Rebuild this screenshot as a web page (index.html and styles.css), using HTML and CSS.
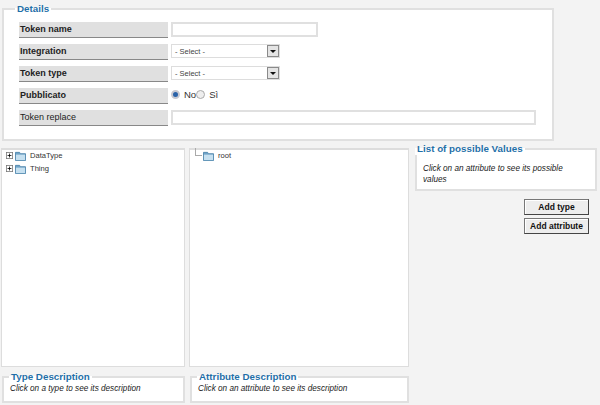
FILE: index.html
```html
<!DOCTYPE html>
<html lang="en">
<head>
  <meta charset="UTF-8">
  <title>Token</title>
  <link rel="stylesheet" href="styles.css">
</head>
<body>
  <svg class="defs" width="0" height="0">
    <symbol id="folder" viewBox="0 0 14 11">
      <path d="M1.5 10.5V1.5H6L7 3H12.5V10.5Z" fill="#6fa3c7" stroke="#4f87ad"/>
      <rect x="2" y="4" width="10" height="6" fill="#c6e0f0"/>
    </symbol>
    <symbol id="plus" viewBox="0 0 9 9">
      <rect x="0.5" y="0.5" width="8" height="8" fill="#fff" stroke="#777"/>
      <path d="M2 4.5H7M4.5 2V7" stroke="#000"/>
    </symbol>
  </svg>

  <fieldset class="box details">
    <legend>Details</legend>
    <div class="row">
      <label class="lbl">Token name</label>
      <input class="txt short" type="text">
    </div>
    <div class="row">
      <label class="lbl">Integration</label>
      <div class="sel">- Select -<span class="arrow"></span></div>
    </div>
    <div class="row">
      <label class="lbl">Token type</label>
      <div class="sel">- Select -<span class="arrow"></span></div>
    </div>
    <div class="row">
      <label class="lbl">Pubblicato</label>
      <div class="radios">
        <span class="radio on"></span><span class="opt">No</span><span class="radio"></span><span class="opt">Sì</span>
      </div>
    </div>
    <div class="row">
      <label class="lbl plain">Token replace</label>
      <input class="txt long" type="text">
    </div>
  </fieldset>

  <div class="main">
    <div class="col-tree">
      <div class="tree">
        <div class="node"><svg class="plus"><use href="#plus"/></svg><svg class="folder"><use href="#folder"/></svg>DataType</div>
        <div class="node"><svg class="plus"><use href="#plus"/></svg><svg class="folder"><use href="#folder"/></svg>Thing</div>
      </div>
      <fieldset class="box desc">
        <legend>Type Description</legend>
        <p>Click on a type to see its description</p>
      </fieldset>
    </div>
    <div class="col-tree second">
      <div class="tree">
        <div class="node root"><span class="elbow"></span><svg class="folder"><use href="#folder"/></svg>root</div>
      </div>
      <fieldset class="box desc">
        <legend>Attribute Description</legend>
        <p>Click on an attribute to see its description</p>
      </fieldset>
    </div>
    <div class="side">
      <fieldset class="box values">
        <legend>List of possible Values</legend>
        <p>Click on an attribute to see its possible values</p>
      </fieldset>
      <button class="btn" type="button">Add type</button>
      <button class="btn" type="button">Add attribute</button>
    </div>
  </div>
</body>
</html>
```

FILE: styles.css
```css
body {
  margin: 0;
  background-color: #f3f3f3;
  font-family: "Liberation Sans", Arial, sans-serif;
  font-size: 8.2px;
  color: #333;
  overflow: hidden;
}

.defs {
  display: block;
}

.box {
  margin: 0;
  padding: 0;
  background: white;
  border: 2px solid #e0e0e0;
  min-width: 0;
}

.box legend {
  padding: 0 2px;
  font-size: 9.8px;
  line-height: 13px;
  font-weight: bold;
  color: #1f6fa8;
}

.box p {
  margin: 0;
  font-style: italic;
  color: #222;
}

.details {
  width: 552px;
  height: 139px;
  box-sizing: border-box;
  margin: 2px 0 0 2px;
  padding: 7px 15px 0;
}

.details legend {
  margin-left: -4px;
}

.row {
  display: flex;
  align-items: flex-start;
  gap: 3px;
  height: 22px;
}

.lbl {
  width: 148px;
  height: 15px;
  line-height: 15px;
  padding-left: 1px;
  background: #e0e0e0;
  border-bottom: 1px solid #888;
  font-size: 9px;
  font-weight: bold;
  color: #222;
}

.lbl.plain {
  font-weight: normal;
}

.txt {
  margin: 0;
  padding: 0;
  height: 11px;
  background: white;
  border: 2px solid #e0e0e0;
}

.short {
  width: 143px;
}

.long {
  width: 361px;
}

.sel {
  display: flex;
  align-items: center;
  justify-content: space-between;
  width: 104px;
  height: 12px;
  padding-left: 3px;
  background: white;
  border: 1px solid #ddd;
  font-size: 7.5px;
  color: #444;
}

.arrow {
  position: relative;
  width: 10px;
  height: 10px;
  background: #e4e4e4;
  border: 1px solid #8a8a8a;
}

.arrow::after {
  content: "";
  position: absolute;
  left: 2px;
  top: 4px;
  border: 3px solid transparent;
  border-top: 3px solid #111;
  border-bottom: 0;
}

.radios {
  display: flex;
  align-items: center;
  height: 13px;
  font-size: 9.5px;
  color: #333;
}

.radio {
  width: 7px;
  height: 7px;
  background: #eee;
  border: 1px solid #aaa;
  border-radius: 50%;
}

.radio.on {
  background: #2a62a8;
  border: 2px solid #c8c8d0;
  width: 5px;
  height: 5px;
}

.opt {
  margin-left: 4px;
}

.main {
  display: flex;
  margin: 7px 0 0 1px;
}

.col-tree {
  width: 184px;
  margin-right: 4px;
}

.col-tree.second {
  width: 220px;
  margin-right: 6px;
}

.tree {
  box-sizing: border-box;
  height: 219px;
  background: white;
  border: 1px solid #ddd;
  border-top-width: 2px;
  padding: 0 0 0 3px;
}

.node {
  display: flex;
  align-items: center;
  height: 13px;
  font-size: 7.6px;
  color: #333;
}

.node:first-child {
  margin-top: -1px;
}

.plus {
  width: 7px;
  height: 7px;
  margin: 0 1px 0 1px;
}

.folder {
  width: 13px;
  height: 10px;
  margin-right: 3px;
}

.root {
  padding-left: 2px;
}

.elbow {
  width: 6px;
  height: 7px;
  margin: -7px 0 0 0;
  border-left: 1px solid #aaa;
  border-bottom: 1px solid #aaa;
}

.desc {
  height: 33px;
  box-sizing: border-box;
  margin-top: 3px;
  margin-left: 1px;
  padding: 0 6px;
}

.desc legend {
  margin-left: -1px;
}

.desc p {
  margin-top: 1px;
}

.side {
  display: flex;
  flex-direction: column;
  align-items: flex-end;
  width: 182px;
}

.values {
  width: 100%;
  height: 49px;
  box-sizing: border-box;
  margin-top: -6px;
  padding: 8px 25px 0 6px;
}

.values legend {
  margin-left: -8px;
}

.values p {
  line-height: 11px;
}

.btn {
  width: 65px;
  height: 16px;
  margin: 0 8px 3px 0;
  padding: 0;
  background: #ededed;
  border: 1px solid #777;
  border-right-color: #444;
  border-bottom-color: #444;
  box-shadow: inset 1px 1px 0 #fff;
  font-family: inherit;
  font-size: 8.5px;
  font-weight: bold;
  color: #111;
}

.values + .btn {
  margin-top: 8px;
}
```
